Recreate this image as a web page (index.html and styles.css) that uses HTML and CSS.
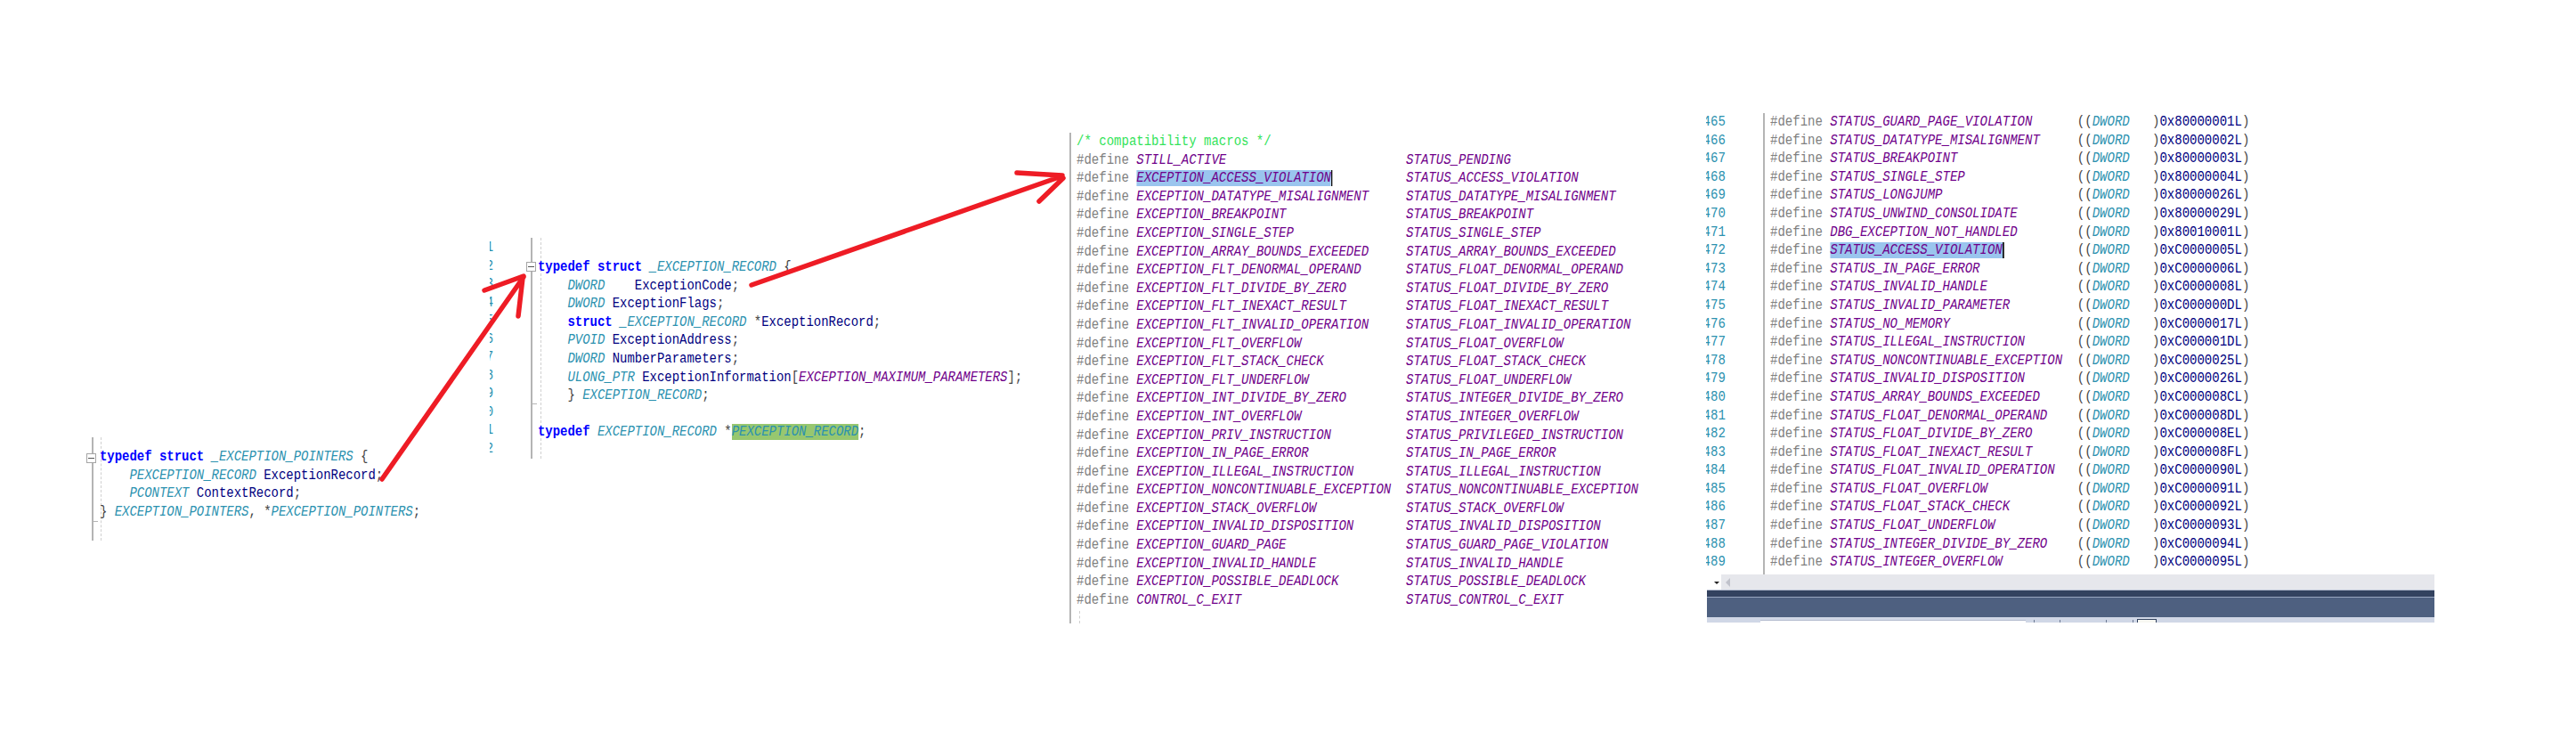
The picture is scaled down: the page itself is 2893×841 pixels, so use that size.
FILE: index.html
```html
<!DOCTYPE html>
<html lang="en">
<head>
<meta charset="utf-8">
<title>Exception records</title>
<link rel="stylesheet" href="styles.css">
</head>
<body>
<main class="stage">
  <section class="panel p1">
    <div class="rail"></div><div class="dash"></div><div class="tick"></div>
    <div class="fold"></div>
    <div class="code"><div class="ln"><b>typedef struct</b> <i class="t">_EXCEPTION_POINTERS</i> {</div><div class="ln">    <i class="t">PEXCEPTION_RECORD</i> <span class="v">ExceptionRecord</span>;</div><div class="ln">    <i class="t">PCONTEXT</i> <span class="v">ContextRecord</span>;</div><div class="ln">} <i class="t">EXCEPTION_POINTERS</i>, *<i class="t">PEXCEPTION_POINTERS</i>;</div></div>
  </section>

  <section class="panel p2">
    <div class="nums"><div>1</div><div>2</div><div>3</div><div>4</div><div>5</div><div>6</div><div>7</div><div>8</div><div>9</div><div>0</div><div>1</div><div>2</div></div>
    <div class="rail"></div><div class="dash"></div><div class="tick"></div>
    <div class="fold"></div>
    <div class="code"><div class="ln"><b>typedef struct</b> <i class="t">_EXCEPTION_RECORD</i> {</div><div class="ln">    <i class="t">DWORD</i>    <span class="v">ExceptionCode</span>;</div><div class="ln">    <i class="t">DWORD</i> <span class="v">ExceptionFlags</span>;</div><div class="ln">    <b>struct</b> <i class="t">_EXCEPTION_RECORD</i> *<span class="v">ExceptionRecord</span>;</div><div class="ln">    <i class="t">PVOID</i> <span class="v">ExceptionAddress</span>;</div><div class="ln">    <i class="t">DWORD</i> <span class="v">NumberParameters</span>;</div><div class="ln">    <i class="t">ULONG_PTR</i> <span class="v">ExceptionInformation</span>[<i class="m">EXCEPTION_MAXIMUM_PARAMETERS</i>];</div><div class="ln">    } <i class="t">EXCEPTION_RECORD</i>;</div><div class="ln"> </div><div class="ln"><b>typedef</b> <i class="t">EXCEPTION_RECORD</i> *<i class="t green">PEXCEPTION_RECORD</i>;</div></div>
  </section>

  <section class="panel p3">
    <div class="rail"></div><div class="dash"></div>
    <div class="code"><div class="ln"><span class="c">/* compatibility macros */</span></div><div class="ln"><span class="d">#define</span> <i class="m">STILL_ACTIVE                        STATUS_PENDING</i></div><div class="ln"><span class="d">#define</span> <i class="m"><span class="sel">EXCEPTION_ACCESS_VIOLATION</span>          STATUS_ACCESS_VIOLATION</i></div><div class="ln"><span class="d">#define</span> <i class="m">EXCEPTION_DATATYPE_MISALIGNMENT     STATUS_DATATYPE_MISALIGNMENT</i></div><div class="ln"><span class="d">#define</span> <i class="m">EXCEPTION_BREAKPOINT                STATUS_BREAKPOINT</i></div><div class="ln"><span class="d">#define</span> <i class="m">EXCEPTION_SINGLE_STEP               STATUS_SINGLE_STEP</i></div><div class="ln"><span class="d">#define</span> <i class="m">EXCEPTION_ARRAY_BOUNDS_EXCEEDED     STATUS_ARRAY_BOUNDS_EXCEEDED</i></div><div class="ln"><span class="d">#define</span> <i class="m">EXCEPTION_FLT_DENORMAL_OPERAND      STATUS_FLOAT_DENORMAL_OPERAND</i></div><div class="ln"><span class="d">#define</span> <i class="m">EXCEPTION_FLT_DIVIDE_BY_ZERO        STATUS_FLOAT_DIVIDE_BY_ZERO</i></div><div class="ln"><span class="d">#define</span> <i class="m">EXCEPTION_FLT_INEXACT_RESULT        STATUS_FLOAT_INEXACT_RESULT</i></div><div class="ln"><span class="d">#define</span> <i class="m">EXCEPTION_FLT_INVALID_OPERATION     STATUS_FLOAT_INVALID_OPERATION</i></div><div class="ln"><span class="d">#define</span> <i class="m">EXCEPTION_FLT_OVERFLOW              STATUS_FLOAT_OVERFLOW</i></div><div class="ln"><span class="d">#define</span> <i class="m">EXCEPTION_FLT_STACK_CHECK           STATUS_FLOAT_STACK_CHECK</i></div><div class="ln"><span class="d">#define</span> <i class="m">EXCEPTION_FLT_UNDERFLOW             STATUS_FLOAT_UNDERFLOW</i></div><div class="ln"><span class="d">#define</span> <i class="m">EXCEPTION_INT_DIVIDE_BY_ZERO        STATUS_INTEGER_DIVIDE_BY_ZERO</i></div><div class="ln"><span class="d">#define</span> <i class="m">EXCEPTION_INT_OVERFLOW              STATUS_INTEGER_OVERFLOW</i></div><div class="ln"><span class="d">#define</span> <i class="m">EXCEPTION_PRIV_INSTRUCTION          STATUS_PRIVILEGED_INSTRUCTION</i></div><div class="ln"><span class="d">#define</span> <i class="m">EXCEPTION_IN_PAGE_ERROR             STATUS_IN_PAGE_ERROR</i></div><div class="ln"><span class="d">#define</span> <i class="m">EXCEPTION_ILLEGAL_INSTRUCTION       STATUS_ILLEGAL_INSTRUCTION</i></div><div class="ln"><span class="d">#define</span> <i class="m">EXCEPTION_NONCONTINUABLE_EXCEPTION  STATUS_NONCONTINUABLE_EXCEPTION</i></div><div class="ln"><span class="d">#define</span> <i class="m">EXCEPTION_STACK_OVERFLOW            STATUS_STACK_OVERFLOW</i></div><div class="ln"><span class="d">#define</span> <i class="m">EXCEPTION_INVALID_DISPOSITION       STATUS_INVALID_DISPOSITION</i></div><div class="ln"><span class="d">#define</span> <i class="m">EXCEPTION_GUARD_PAGE                STATUS_GUARD_PAGE_VIOLATION</i></div><div class="ln"><span class="d">#define</span> <i class="m">EXCEPTION_INVALID_HANDLE            STATUS_INVALID_HANDLE</i></div><div class="ln"><span class="d">#define</span> <i class="m">EXCEPTION_POSSIBLE_DEADLOCK         STATUS_POSSIBLE_DEADLOCK</i></div><div class="ln"><span class="d">#define</span> <i class="m">CONTROL_C_EXIT                      STATUS_CONTROL_C_EXIT</i></div></div>
  </section>

  <section class="panel p4">
    <div class="gutter"><div class="no">465</div><div class="no">466</div><div class="no">467</div><div class="no">468</div><div class="no">469</div><div class="no">470</div><div class="no">471</div><div class="no">472</div><div class="no">473</div><div class="no">474</div><div class="no">475</div><div class="no">476</div><div class="no">477</div><div class="no">478</div><div class="no">479</div><div class="no">480</div><div class="no">481</div><div class="no">482</div><div class="no">483</div><div class="no">484</div><div class="no">485</div><div class="no">486</div><div class="no">487</div><div class="no">488</div><div class="no">489</div></div>
    <div class="rail"></div>
    <div class="code"><div class="ln"><span class="d">#define</span> <i class="m">STATUS_GUARD_PAGE_VIOLATION     </i> ((<i class="t">DWORD</i>   )<span class="v">0x80000001L</span>)</div><div class="ln"><span class="d">#define</span> <i class="m">STATUS_DATATYPE_MISALIGNMENT    </i> ((<i class="t">DWORD</i>   )<span class="v">0x80000002L</span>)</div><div class="ln"><span class="d">#define</span> <i class="m">STATUS_BREAKPOINT               </i> ((<i class="t">DWORD</i>   )<span class="v">0x80000003L</span>)</div><div class="ln"><span class="d">#define</span> <i class="m">STATUS_SINGLE_STEP              </i> ((<i class="t">DWORD</i>   )<span class="v">0x80000004L</span>)</div><div class="ln"><span class="d">#define</span> <i class="m">STATUS_LONGJUMP                 </i> ((<i class="t">DWORD</i>   )<span class="v">0x80000026L</span>)</div><div class="ln"><span class="d">#define</span> <i class="m">STATUS_UNWIND_CONSOLIDATE       </i> ((<i class="t">DWORD</i>   )<span class="v">0x80000029L</span>)</div><div class="ln"><span class="d">#define</span> <i class="m">DBG_EXCEPTION_NOT_HANDLED       </i> ((<i class="t">DWORD</i>   )<span class="v">0x80010001L</span>)</div><div class="ln"><span class="d">#define</span> <i class="m"><span class="sel">STATUS_ACCESS_VIOLATION</span>         </i> ((<i class="t">DWORD</i>   )<span class="v">0xC0000005L</span>)</div><div class="ln"><span class="d">#define</span> <i class="m">STATUS_IN_PAGE_ERROR            </i> ((<i class="t">DWORD</i>   )<span class="v">0xC0000006L</span>)</div><div class="ln"><span class="d">#define</span> <i class="m">STATUS_INVALID_HANDLE           </i> ((<i class="t">DWORD</i>   )<span class="v">0xC0000008L</span>)</div><div class="ln"><span class="d">#define</span> <i class="m">STATUS_INVALID_PARAMETER        </i> ((<i class="t">DWORD</i>   )<span class="v">0xC000000DL</span>)</div><div class="ln"><span class="d">#define</span> <i class="m">STATUS_NO_MEMORY                </i> ((<i class="t">DWORD</i>   )<span class="v">0xC0000017L</span>)</div><div class="ln"><span class="d">#define</span> <i class="m">STATUS_ILLEGAL_INSTRUCTION      </i> ((<i class="t">DWORD</i>   )<span class="v">0xC000001DL</span>)</div><div class="ln"><span class="d">#define</span> <i class="m">STATUS_NONCONTINUABLE_EXCEPTION </i> ((<i class="t">DWORD</i>   )<span class="v">0xC0000025L</span>)</div><div class="ln"><span class="d">#define</span> <i class="m">STATUS_INVALID_DISPOSITION      </i> ((<i class="t">DWORD</i>   )<span class="v">0xC0000026L</span>)</div><div class="ln"><span class="d">#define</span> <i class="m">STATUS_ARRAY_BOUNDS_EXCEEDED    </i> ((<i class="t">DWORD</i>   )<span class="v">0xC000008CL</span>)</div><div class="ln"><span class="d">#define</span> <i class="m">STATUS_FLOAT_DENORMAL_OPERAND   </i> ((<i class="t">DWORD</i>   )<span class="v">0xC000008DL</span>)</div><div class="ln"><span class="d">#define</span> <i class="m">STATUS_FLOAT_DIVIDE_BY_ZERO     </i> ((<i class="t">DWORD</i>   )<span class="v">0xC000008EL</span>)</div><div class="ln"><span class="d">#define</span> <i class="m">STATUS_FLOAT_INEXACT_RESULT     </i> ((<i class="t">DWORD</i>   )<span class="v">0xC000008FL</span>)</div><div class="ln"><span class="d">#define</span> <i class="m">STATUS_FLOAT_INVALID_OPERATION  </i> ((<i class="t">DWORD</i>   )<span class="v">0xC0000090L</span>)</div><div class="ln"><span class="d">#define</span> <i class="m">STATUS_FLOAT_OVERFLOW           </i> ((<i class="t">DWORD</i>   )<span class="v">0xC0000091L</span>)</div><div class="ln"><span class="d">#define</span> <i class="m">STATUS_FLOAT_STACK_CHECK        </i> ((<i class="t">DWORD</i>   )<span class="v">0xC0000092L</span>)</div><div class="ln"><span class="d">#define</span> <i class="m">STATUS_FLOAT_UNDERFLOW          </i> ((<i class="t">DWORD</i>   )<span class="v">0xC0000093L</span>)</div><div class="ln"><span class="d">#define</span> <i class="m">STATUS_INTEGER_DIVIDE_BY_ZERO   </i> ((<i class="t">DWORD</i>   )<span class="v">0xC0000094L</span>)</div><div class="ln"><span class="d">#define</span> <i class="m">STATUS_INTEGER_OVERFLOW         </i> ((<i class="t">DWORD</i>   )<span class="v">0xC0000095L</span>)</div></div>
    <div class="statusbars">
      <div class="scroll"><div class="combo"><span class="caret"></span></div><span class="left"></span></div>
      <div class="darkbar"></div>
      <div class="midbar"></div>
      <div class="lightbar"><span class="field"></span><span class="sep s1"></span><span class="sep s2"></span><span class="sep s3"></span><span class="sep s4"></span><span class="box"></span></div>
    </div>
  </section>

  <svg class="arrows" width="2893" height="841" viewBox="0 0 2893 841" aria-hidden="true">
    <path d="M429 538 L588 311 M544 326 L588 310 M582 355 L587 312"/>
    <path d="M844 320 L1192 198 M1142 194 L1193 197 M1167 226 L1194 200"/>
  </svg>
</main>
</body>
</html>
```
FILE: styles.css
```css
html, body {
  margin: 0;
  padding: 0;
  background: #fff;
}
.stage {
  position: relative;
  width: 2893px;
  height: 841px;
  overflow: hidden;
}
.panel {
  position: absolute;
}
.p1 { left: 97px; top: 491px; width: 400px; height: 116px; }
.p2 { left: 550px; top: 267px; width: 620px; height: 248px; }
.p3 { left: 1201px; top: 149px; width: 680px; height: 551px; }
.p4 { left: 1916px; top: 127px; width: 818px; height: 572px; }

.code {
  position: absolute;
  font-family: "Liberation Mono", monospace;
  font-size: 16px;
  white-space: pre;
  color: #444;
  transform-origin: 0 0;
  transform: scaleX(.872);
}
.ln { height: 20.6px; line-height: 20.6px; }
.p1 .code { left: 15px; top: 12px; }
.p2 .code { left: 54px; top: 23px; }
.p3 .code { left: 8px; top: 0; transform: scaleX(.876); }
.p4 .code { left: 72px; top: 0; transform: scaleX(.876); }

b { color: #0000ff; font-weight: 700; }
i { font-style: italic; }
.t { color: #2b91af; }
.m { color: #6f008a; }
.v { color: #000080; }
.d { color: #808080; }
.c { color: #33e35a; }
.green { background: #97c76f; }
.sel { background: #9ac5ee; box-shadow: 2px 0 0 #111; }

.rail {
  position: absolute;
  width: 2px;
  background: #b4b4b4;
  top: 0;
  bottom: 0;
}
.dash {
  position: absolute;
  top: 0;
  bottom: 0;
  border-left: 1px dashed #d0d0d0;
}
.tick {
  position: absolute;
  height: 1px;
  width: 6px;
  background: #b4b4b4;
}
.fold {
  position: absolute;
  box-sizing: border-box;
  width: 11px;
  height: 11px;
  border: 1px solid #a5a5a5;
  background: linear-gradient(#555, #555) center / 7px 1px no-repeat, #fff;
}
.p1 .rail { left: 6px; }
.p1 .dash { left: 16px; }
.p1 .tick { left: 7px; top: 94px; }
.p1 .fold { left: 0; top: 18px; }
.p2 .rail { left: 46px; }
.p2 .dash { left: 57px; }
.p2 .tick { left: 47px; top: 186px; }
.p2 .fold { left: 41px; top: 27px; }
.p3 .rail { left: 0; }
.p3 .dash { left: 11px; top: 537px; }

.nums {
  position: absolute;
  left: 0;
  top: 1px;
  width: 4px;
  overflow: hidden;
  direction: rtl;
  font: 16px/20.5px "Liberation Mono", monospace;
  color: #2b91af;
}
.nums div { width: 4px; transform: scaleX(.87); transform-origin: 100% 0; }

.gutter {
  position: absolute;
  left: 0;
  top: 0;
  width: 22px;
  overflow: hidden;
  display: flex;
  flex-direction: column;
  align-items: flex-end;
  font: 16px/20.6px "Liberation Mono", monospace;
  color: #2b91af;
}
.no { height: 20.6px; transform: scaleX(.876); transform-origin: 100% 0; }
.p4 .rail { left: 64px; bottom: 54px; }

.statusbars {
  position: absolute;
  left: 1px;
  right: 0;
  top: 518px;
  display: flex;
  flex-direction: column;
}
.scroll {
  height: 17px;
  background: #e6e7ec;
  display: flex;
  align-items: center;
  gap: 5px;
}
.combo {
  width: 16px;
  height: 17px;
  background: #fff;
  position: relative;
}
.caret {
  position: absolute;
  left: 8px;
  top: 8px;
  border: 3px solid transparent;
  border-top: 3px solid #222;
  border-bottom: 0;
}
.left {
  border: 5px solid transparent;
  border-right: 5px solid #c0c2cb;
  border-left: 0;
}
.darkbar {
  height: 7px;
  background: #33425f;
  border-top: 1px solid #b7bfd2;
  border-bottom: 1px solid #99a6c0;
}
.midbar {
  height: 22px;
  background: #4e6080;
}
.lightbar {
  height: 6px;
  background: #d0d7e6;
  position: relative;
  overflow: hidden;
}
.field {
  position: absolute;
  left: 60px;
  top: 3px;
  width: 298px;
  height: 4px;
  background: #fff;
  border-top: 1px solid #b5bdd0;
}
.sep {
  position: absolute;
  top: 3px;
  width: 1px;
  height: 3px;
  background: #6d7a94;
}
.s1 { left: 367px; }
.s2 { left: 396px; }
.s3 { left: 448px; }
.s4 { left: 478px; }
.box {
  position: absolute;
  left: 483px;
  top: 2px;
  width: 20px;
  height: 6px;
  background: #f7f7f2;
  border: 1px solid #33425f;
}

.arrows {
  position: absolute;
  left: 0;
  top: 0;
  pointer-events: none;
}
.arrows path {
  fill: none;
  stroke: #ee1c25;
  stroke-width: 5.5;
  stroke-linecap: round;
}
```
